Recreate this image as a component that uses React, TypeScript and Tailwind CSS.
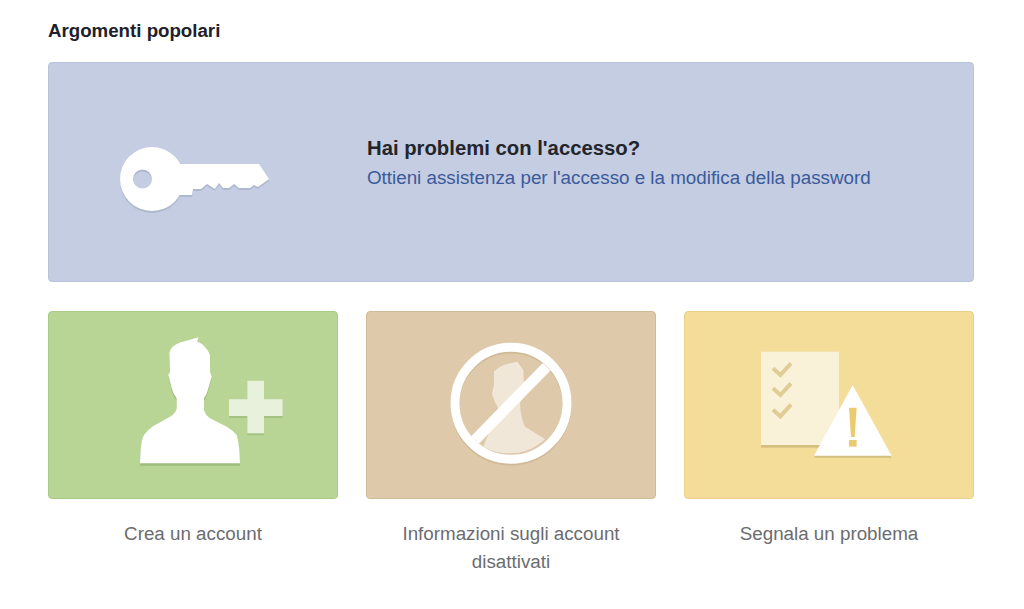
function KeyIcon() {
  const key =
    'M183 179a32 32 0 1 1-64 0a32 32 0 0 1 64 0Z M151 179a9.5 9.5 0 1 0-19 0a9.5 9.5 0 0 0 19 0Z'
  const blade = 'M178 164H258L268 179L257 187L253 185L249 188H238L233 184L228 188H222L218 183L214 189L206 184L200 189H192L191 195H178Z'
  return (
    <svg viewBox="118 145 152 72" className="mt-[17px] ml-[70px] h-[72px] w-[152px] shrink-0">
      <g fill="#a9b3ca" fillOpacity="0.8" fillRule="evenodd" transform="translate(0 2)" className="blur-[0.6px]">
        <path d={key} />
        <path d={blade} />
      </g>
      <path fill="#ffffff" fillRule="evenodd" d={key} />
      <path fill="#ffffff" d={blade} />
    </svg>
  )
}

function AddPersonIcon() {
  const person =
    'M60 430L62 390Q64 360 72 345Q85 328 100 318L150 290Q170 278 170 265V235Q160 222 155 205L145 165L150 155L148 100Q152 82 165 75Q180 65 200 62L235 52L232 65Q250 72 258 85Q270 100 270 110V155L275 170L265 205Q260 225 252 235V270Q256 285 270 295L320 320Q340 332 350 345Q356 365 358 390L360 430Z'
  const plus = 'M382 182H432V238H488V288H432V340H382V288H327V238H382Z'
  return (
    <svg viewBox="0 0 540 480" className="h-[160px] w-[180px]">
      <path d={person} fill="#9dbd7c" transform="translate(0 7)" />
      <path d={plus} fill="#a4c482" transform="translate(0 6)" />
      <path d={person} fill="#ffffff" />
      <path d={plus} fill="#e7f1dc" />
    </svg>
  )
}

function BlockedIcon() {
  return (
    <svg viewBox="0 0 480 480" className="h-[160px] w-[160px]">
      <path
        fill="#f1e7d8"
        d="M192 140Q210 118 262 110L280 135L282 190Q280 215 270 235Q272 280 285 305L345 342Q300 385 240 385Q195 385 160 365L205 250Q190 225 186 205L192 180Z"
      />
      <circle cx="243" cy="240" r="168" fill="none" stroke="#c5ae8a" strokeOpacity="0.6" strokeWidth="27" className="blur-[0.6px]" />
      <circle cx="243" cy="235" r="168" fill="none" stroke="#ffffff" strokeWidth="27" />
      <path d="M135 345L350 125" stroke="#ffffff" strokeWidth="32" />
    </svg>
  )
}

function ReportIcon() {
  const checks = [100, 160, 224]
  return (
    <svg viewBox="0 0 495 405" className="h-[135px] w-[165px]">
      <rect x="48" y="56" width="234" height="282" fill="#d3bf80" />
      <rect x="48" y="50" width="234" height="280" fill="#faf2d8" />
      {checks.map((y) => (
        <path
          key={y}
          d={`M84 ${y}L106 ${y + 20}L138 ${y - 15}`}
          fill="none"
          stroke="#e0cd96"
          strokeWidth="12"
        />
      ))}
      <path d="M323 156L207 368H440Z" fill="#d3bf80" />
      <path d="M323 150L207 362H440Z" fill="#ffffff" />
      <path d="M312 218H335L329 306H318Z" fill="#eccb70" />
      <rect x="312" y="315" width="23" height="20" fill="#eccb70" />
    </svg>
  )
}

function TopicCard({
  label,
  cardClass,
  iconClass,
  icon,
}: {
  label: string
  cardClass: string
  iconClass: string
  icon: React.ReactNode
}) {
  return (
    <div className="w-[290px] text-center">
      <div className={`h-[188px] rounded-[4px] border ${cardClass}`}>
        <div className={iconClass}>{icon}</div>
      </div>
      <p className="mt-[21px] px-3 text-[18.8px] leading-[28px] text-[#6b6c70]">{label}</p>
    </div>
  )
}

export default function App() {
  return (
    <div className="min-h-[609px] bg-white px-[48px] pt-[20px] font-['Liberation_Sans',Arial,sans-serif]">
      <h2 className="text-[18.7px] leading-[21px] font-bold text-[#1d2129]">Argomenti popolari</h2>
      <div className="mt-[21px] flex h-[220px] w-[926px] items-center rounded-[4px] border border-[#b9c3da] bg-[#c4cde1]">
        <KeyIcon />
        <div className="ml-[96px] pb-[18px]">
          <h3 className="text-[20.3px] leading-[30px] font-bold text-[#23252b]">
            Hai problemi con l'accesso?
          </h3>
          <a className="block text-[18.8px] leading-[30px] text-[#3b5a9b]">
            Ottieni assistenza per l'accesso e la modifica della password
          </a>
        </div>
      </div>
      <div className="mt-[29px] flex w-[926px] gap-[28px]">
        <TopicCard
          label="Crea un account"
          cardClass="border-[#a8cb85] bg-[#b8d595]"
          iconClass="ml-[71px] mt-[8px]"
          icon={<AddPersonIcon />}
        />
        <TopicCard
          label="Informazioni sugli account disattivati"
          cardClass="border-[#d1bb96] bg-[#decaaa]"
          iconClass="ml-[63px] mt-[13px]"
          icon={<BlockedIcon />}
        />
        <TopicCard
          label="Segnala un problema"
          cardClass="border-[#e8d089] bg-[#f4dc99]"
          iconClass="ml-[60px] mt-[23px]"
          icon={<ReportIcon />}
        />
      </div>
    </div>
  )
}
